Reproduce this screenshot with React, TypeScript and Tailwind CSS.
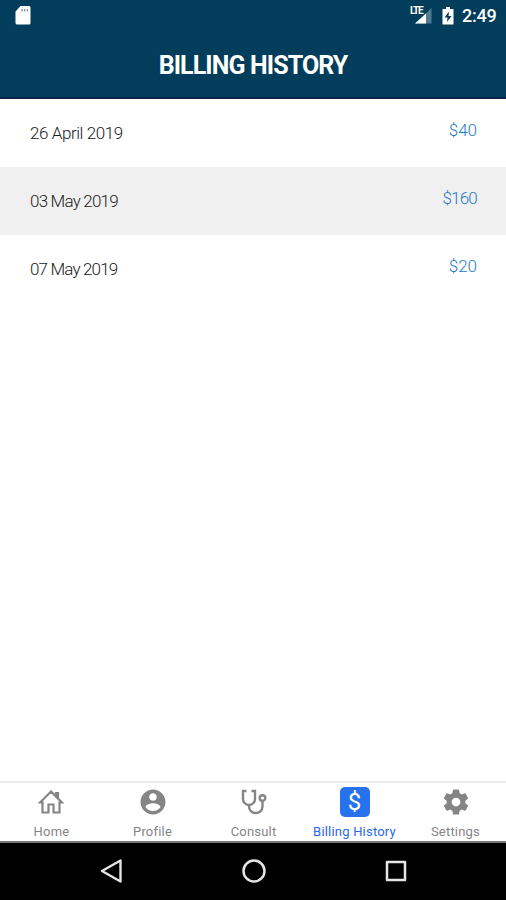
import type { ReactNode } from 'react';

const bills = [
  { date: '26 April 2019', amount: '$40', row: 'bg-white', dateTracking: 'tracking-[-0.43px]', amountTracking: 'tracking-[0px]' },
  { date: '03 May 2019', amount: '$160', row: 'bg-[#f0f0f0]', dateTracking: 'tracking-[-0.8px]', amountTracking: 'tracking-[-0.8px]' },
  { date: '07 May 2019', amount: '$20', row: 'bg-white', dateTracking: 'tracking-[-0.85px]', amountTracking: 'tracking-[0px]' },
];

function StatusBar() {
  return (
    <div className="flex h-8 items-center justify-between pl-[15px] pr-[9px]">
      <svg width="16" height="20" viewBox="0 0 16 20">
        <path d="M5.500 0H14a1.500 1.500 0 0 1 1.500 1.500v15.500A1.500 1.500 0 0 1 14 18.500H2a1.500 1.500 0 0 1-1.500-1.500V5.500z" fill="#fff" />
        <path d="M7 3v2.500M9.700 3v2.500M12.400 3v2.500" stroke="#8b9da8" strokeWidth="1.400" />
      </svg>
      <div className="flex items-center">
        <div className="relative h-5 w-[22px]">
          <svg className="absolute inset-0" width="22" height="20" viewBox="0 0 22 20">
            <path d="M21.500 2v15.500H5z" fill="#527b91" />
            <path d="M16 7.500v10H5z" fill="#fff" />
          </svg>
          <span className="absolute left-0 top-[-1px] text-[10px] font-bold leading-[12px] tracking-[-1.2px] text-white">LTE</span>
        </div>
        <svg className="ml-[10px]" width="12" height="18" viewBox="0 0 12 18">
          <path d="M4 0h4v2h3.500v15.500H.5V2H4z" fill="#fff" />
          <path d="M7 4.500 2.500 10.500H5.500L5 15l4.500-6h-3z" fill="#073c58" />
        </svg>
        <span className="ml-2 w-[35px] whitespace-nowrap text-[18px] font-medium leading-5 tracking-[-0.2px] text-white">2:49</span>
      </div>
    </div>
  );
}

function Tab({ label, children, active = false }: { label: string; children: ReactNode; active?: boolean }) {
  return (
    <div className={`flex flex-1 flex-col items-center ${active ? 'text-[#2868ed]' : 'text-[#858585]'}`}>
      <div className="flex h-[37px] items-center justify-center">{children}</div>
      <span className="mt-[3px] whitespace-nowrap text-[13px] leading-[17px] tracking-[0.2px]">{label}</span>
    </div>
  );
}

export default function App() {
  return (
    <div className="flex h-[900px] w-[506px] flex-col overflow-hidden bg-white font-[Roboto,sans-serif]">
      <header className="h-[99px] border-b-2 border-[#09234b] bg-[#023e5b]">
        <StatusBar />
        <h1 className="mt-[20px] whitespace-nowrap text-center text-[25px] font-bold leading-7 tracking-[-0.9px] text-white">BILLING HISTORY</h1>
      </header>
      <main className="flex-1">
        {bills.map((bill) => (
          <div key={bill.date} className={`flex h-[68px] justify-between pl-[30px] pr-[29px] text-[17px] font-light leading-6 ${bill.row}`}>
            <span className={`pt-[22px] text-[#202020] ${bill.dateTracking}`}>{bill.date}</span>
            <span className={`pt-[19px] text-[#247cc5] ${bill.amountTracking}`}>{bill.amount}</span>
          </div>
        ))}
      </main>
      <nav className="flex h-[60px] border-t-2 border-[#eeeeee] bg-white pl-[1px]">
        <Tab label="Home">
          <svg className="mr-[1px]" width="26" height="26" viewBox="0 0 26 26" fill="none" stroke="currentColor" strokeWidth="2.200">
            <path d="M2 13.500H4.500V23.500H10.500V15.500H15.500V23.500H21.500V13.500H24L20 9.500V4H18V7.500L13 2.500z" />
          </svg>
        </Tab>
        <Tab label="Profile">
          <svg width="30" height="30" viewBox="0 0 24 24" fill="currentColor">
            <path d="M12 2C6.480 2 2 6.480 2 12s4.480 10 10 10 10-4.480 10-10S17.520 2 12 2zm0 3c1.660 0 3 1.340 3 3s-1.340 3-3 3-3-1.340-3-3 1.340-3 3-3zm0 14.200c-2.500 0-4.710-1.280-6-3.220.030-1.990 4-3.080 6-3.080 1.990 0 5.970 1.090 6 3.080-1.290 1.940-3.500 3.220-6 3.220z" />
          </svg>
        </Tab>
        <Tab label="Consult">
          <svg width="28" height="26" viewBox="0 0 28 26" fill="none" stroke="currentColor" strokeWidth="2.400">
            <path d="M6.500 2H3v8a6 6 0 0 0 12 0V2h-3.500M9 16v1.500a6.500 6.500 0 0 0 6.500 6.500A6.500 6.500 0 0 0 22.500 17.500V12" />
            <circle cx="22.500" cy="9" r="2.800" />
          </svg>
        </Tab>
        <Tab label="Billing History" active>
          <div className="flex h-[30px] w-[30px] items-center justify-center rounded-[5px] bg-[#2772ee] text-[24px] font-normal leading-none text-white">$</div>
        </Tab>
        <Tab label="Settings">
          <svg width="30" height="30" viewBox="0 0 24 24" fill="currentColor">
            <path d="M19.430 12.980c.040-.320.070-.640.070-.980s-.030-.660-.070-.980l2.110-1.650c.190-.150.240-.420.120-.640l-2-3.460c-.120-.220-.390-.300-.610-.220l-2.490 1c-.520-.400-1.080-.730-1.690-.980l-.380-2.650C14.460 2.180 14.250 2 14 2h-4c-.250 0-.460.180-.490.420l-.380 2.650c-.610.250-1.170.590-1.690.980l-2.490-1c-.230-.090-.490 0-.610.220l-2 3.460c-.130.220-.070.490.120.640l2.110 1.650c-.040.320-.070.650-.070.980s.030.660.070.980l-2.110 1.650c-.190.150-.240.420-.120.640l2 3.460c.120.220.390.300.610.220l2.490-1c.520.400 1.080.730 1.690.980l.380 2.650c.030.240.240.420.490.420h4c.250 0 .460-.180.490-.420l.380-2.650c.610-.250 1.170-.590 1.690-.980l2.490 1c.230.090.490 0 .610-.220l2-3.460c.120-.220.070-.490-.120-.640zM12 15.500A3.500 3.500 0 1 1 12 8.500a3.500 3.500 0 0 1 0 7z" />
          </svg>
        </Tab>
      </nav>
      <footer className="flex h-[59px] items-center justify-between border-t-2 border-[#777777] bg-black px-[99px] pb-[1px]">
        <svg width="24" height="26" viewBox="0 0 24 26" fill="none" stroke="#e5e5e5" strokeWidth="2.400" strokeLinejoin="round"><path d="M21.500 2.500v21L3 13z" /></svg>
        <svg width="26" height="26" viewBox="0 0 26 26" fill="none" stroke="#e5e5e5" strokeWidth="2.500"><circle cx="13" cy="13" r="10.500" /></svg>
        <svg width="22" height="22" viewBox="0 0 22 22" fill="none" stroke="#e5e5e5" strokeWidth="2.500" strokeLinejoin="round"><path d="M2 2h18v18H2z" /></svg>
      </footer>
    </div>
  );
}
